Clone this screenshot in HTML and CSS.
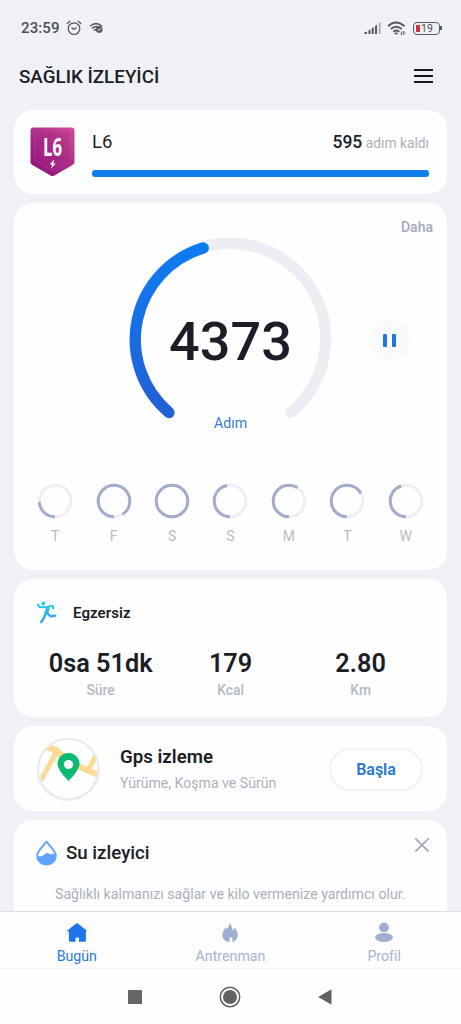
FILE: index.html
```html
<!DOCTYPE html>
<html lang="tr">
<head>
<meta charset="utf-8">
<meta name="viewport" content="width=device-width, initial-scale=1">
<title>Sağlık İzleyici</title>
<link rel="stylesheet" href="styles.css">
</head>
<body>
<div class="phone">
  <div class="status">
    <span class="clock">23:59</span>
    <svg class="alarm" width="16" height="16" viewBox="0 0 16 16" fill="none" stroke="#58595d" stroke-width="1.3" stroke-linecap="round"><circle cx="8" cy="8.6" r="5.8"/><path d="M1.200 3.600 3.800 1.300M14.800 3.600l-2.600-2.300M5.900 7.900 8 9.400l2.300-1.600"/></svg>
    <svg class="linked" width="15" height="12" viewBox="0 0 15 12" fill="none" stroke="#58595d" stroke-width="1.5"><path d="M1 4.200Q7 -1 13 4.200M3 6.500Q6.500 3.400 9.500 4.900M5 8.600Q6.400 7.300 7.600 7.600"/><circle cx="10.200" cy="7.400" r="3.400" fill="#58595d" stroke="none"/><path d="m8.700 7.400 1.200 1.100 1.900-2.200" stroke="#eff1f6" stroke-width="1"/></svg>
    <span class="grow"></span>
    <svg width="18" height="14" viewBox="0 0 18 14"><path fill="#58595d" d="M.4 13v-1.600l2.600-1V13zM4.400 9.500l2-1V13h-2zM7.700 7.300l2-1V13h-2zM11 5l2-1.200V13h-2z"/><path fill="#b2b4b9" d="m14.700 2.400 2-1.400v12h-2z"/></svg>
    <svg class="wifi" width="19" height="15" viewBox="0 0 19 15" fill="none" stroke="#58595d" stroke-width="1.900"><path d="M1 5.200q8-7.200 16.500 0M3.700 8q5.500-4.600 11.100 0M6.300 10.700q3-2.300 6 0"/><path d="m9.200 14-2-2q2-1.200 4 0z" fill="#58595d" stroke="none"/><path d="M14.700 10.400v3.500l-1.200-1.200M16.800 14v-3.600l1.200 1.200" stroke-width="1"/></svg>
    <span class="battery"><i class="charge"></i>19</span><i class="battery-tip"></i>
  </div>

  <header class="header">
    <h1 class="title">SAĞLIK İZLEYİCİ</h1>
    <span class="menu"><i></i><i></i><i></i></span>
  </header>

  <main class="cards">
    <section class="card level">
      <svg class="badge" width="46" height="50" viewBox="0 0 46 50">
        <defs><linearGradient id="shield" x1="1" y1="0" x2="0.2" y2="1"><stop offset="0" stop-color="#d04a96"/><stop offset=".5" stop-color="#ae2f88"/><stop offset="1" stop-color="#8c127a"/></linearGradient></defs>
        <path fill="url(#shield)" d="M3.500.5h38q3 0 3 3V35q0 2-2 3L24.500 48.600q-2 1-4 0L2.500 38q-2-1-2-3V3.500q0-3 3-3z"/>
        <path fill="#a02485" fill-opacity=".28" stroke="#c34b9b" stroke-opacity=".5" stroke-width=".7" d="M5 5h35v28.500L22.500 43.500 5 33.500z"/>
        <path fill="#fff" d="m23.800 33-4.200 4.500h2.400L21.200 41.500l4.600-4.900h-2.600L24.300 33z"/>
        <text class="badge-text" x="22.500" y="28.500" text-anchor="middle" textLength="19" lengthAdjust="spacingAndGlyphs">L6</text>
      </svg>
      <div class="level-info">
        <div class="level-row"><span>L6</span><span class="remaining"><b>595</b> adım kaldı</span></div>
        <div class="progress"></div>
      </div>
    </section>

    <section class="card steps">
      <div class="more">Daha</div>
      <div class="gauge">
        <svg class="dial" width="204" height="190" viewBox="0 0 204 190" fill="none" stroke-width="11.300" stroke-linecap="round">
          <defs><linearGradient id="blue" x1="0" y1="1" x2="0" y2="0"><stop offset="0" stop-color="#235fd5"/><stop offset="1" stop-color="#0e7cf1"/></linearGradient></defs>
          <path stroke="#eceef3" d="M40 174.500A95.700 95.700 0 1 1 162 174.500"/>
          <path stroke="url(#blue)" d="M40 174.500A95.700 95.700 0 0 1 74.200 10"/>
        </svg>
        <div class="count">4373</div>
        <div class="unit">Adım</div>
        <span class="pause"><i></i><i></i></span>
      </div>
      <div class="week">
        <div class="day"><svg class="ring" viewBox="0 0 36 36"><circle class="track" cx="18" cy="18" r="15.800"/><circle class="arc" cx="18" cy="18" r="15.800" pathLength="100" stroke-dasharray="24 100"/></svg>T</div>
        <div class="day"><svg class="ring" viewBox="0 0 36 36"><circle class="track" cx="18" cy="18" r="15.800"/><circle class="arc" cx="18" cy="18" r="15.800" pathLength="100" stroke-dasharray="91 100"/></svg>F</div>
        <div class="day"><svg class="ring" viewBox="0 0 36 36"><circle class="track" cx="18" cy="18" r="15.800"/><circle class="arc" cx="18" cy="18" r="15.800" pathLength="100" stroke-dasharray="100 0"/></svg>S</div>
        <div class="day"><svg class="ring" viewBox="0 0 36 36"><circle class="track" cx="18" cy="18" r="15.800"/><circle class="arc" cx="18" cy="18" r="15.800" pathLength="100" stroke-dasharray="47 100"/></svg>S</div>
        <div class="day"><svg class="ring" viewBox="0 0 36 36"><circle class="track" cx="18" cy="18" r="15.800"/><circle class="arc" cx="18" cy="18" r="15.800" pathLength="100" stroke-dasharray="59 100"/></svg>M</div>
        <div class="day"><svg class="ring" viewBox="0 0 36 36"><circle class="track" cx="18" cy="18" r="15.800"/><circle class="arc" cx="18" cy="18" r="15.800" pathLength="100" stroke-dasharray="67 100"/></svg>T</div>
        <div class="day"><svg class="ring" viewBox="0 0 36 36"><circle class="track" cx="18" cy="18" r="15.800"/><circle class="arc" cx="18" cy="18" r="15.800" pathLength="100" stroke-dasharray="45 100"/></svg>W</div>
      </div>
    </section>

    <section class="card exercise">
      <div class="exercise-head">
        <svg width="22" height="24" viewBox="0 0 22 24" fill="none" stroke="url(#run)" stroke-linecap="round" stroke-linejoin="round">
          <defs><linearGradient id="run" gradientUnits="userSpaceOnUse" x1="10" y1="0" x2="9" y2="22"><stop offset="0" stop-color="#22d3e8"/><stop offset="1" stop-color="#3b9bf0"/></linearGradient></defs>
          <circle cx="7.300" cy="2.500" r="2" fill="#27cfe8" stroke="none"/>
          <path stroke-width="1.900" d="M1.800 3.500 3.300 6 10.500 6.200 16.500 4.600 17.300 7.500"/>
          <path stroke-width="3.800" d="M11.900 7.500 10.300 11.500"/>
          <path stroke-width="2.400" d="m11 12 3.600 3.300 4.700-.6M9.600 12.700l-1.600 4.100L5.300 21"/>
        </svg>
        <h2>Egzersiz</h2>
      </div>
      <div class="stats">
        <div class="stat"><b>0sa 51dk</b><span>Süre</span></div>
        <div class="stat"><b>179</b><span>Kcal</span></div>
        <div class="stat"><b>2.80</b><span>Km</span></div>
      </div>
    </section>

    <section class="card gps">
      <svg class="map" width="64" height="66" viewBox="0 0 64 66">
        <defs><clipPath id="disc"><circle cx="32.300" cy="32" r="29.200"/></clipPath></defs>
        <circle cx="32.300" cy="32.500" r="30.500" fill="#fefefe" stroke="#f0f1f4" stroke-width="2.500"/>
        <circle cx="32.300" cy="32" r="30" fill="#fefefe" stroke="#e7e9ed" stroke-width="1.700"/>
        <g clip-path="url(#disc)" fill="none" stroke="#fadb95">
          <path stroke-width="7" d="m9 9 11 4.500 10 9"/>
          <path stroke-width="5" d="M20 16 5 43"/>
          <path stroke-width="6" d="m42 29 11 5 12 5"/>
          <path stroke-width="5" d="m60 18-8 16"/>
        </g>
        <path fill="#0cba72" d="M32.500 44Q21.500 33 21.500 27a11 11 0 0 1 22 0q0 6-11 17z"/>
        <circle cx="32.500" cy="27.500" r="4.600" fill="#fff"/>
      </svg>
      <div class="gps-text"><h2>Gps izleme</h2><p>Yürüme, Koşma ve Sürün</p></div>
      <button class="start">Başla</button>
    </section>

    <section class="card water">
      <div class="water-head">
        <svg width="22" height="26" viewBox="0 0 22 26"><path fill="#fff" stroke="#68aaf8" stroke-width="2" stroke-linejoin="round" d="M10.500 1.500C7.500 6 1.200 11 1.200 15.700a9.300 8.800 0 0 0 18.600 0C19.800 11 13.500 6 10.500 1.500z"/><path fill="#5ea2fa" d="M1.200 15.700q5 1.500 7.500-1.500 2-2 5-.4 2.500 1.200 6.100-.3v2.200a9.300 8.800 0 0 1-18.600 0z"/></svg>
        <h2>Su izleyici</h2>
        <svg class="close" width="16" height="16" viewBox="0 0 16 16" stroke="#a3a8b5" stroke-width="1.700"><path d="m1.300 1.300 13.400 13.400M14.700 1.300 1.300 14.700"/></svg>
      </div>
      <p>Sağlıklı kalmanızı sağlar ve kilo vermenize yardımcı olur.</p>
    </section>
  </main>

  <nav class="tabs">
    <a class="tab active"><svg width="20" height="20" viewBox="0 0 20 20"><path fill="#1d75ed" d="M10 .8q.7 0 1.200.5L19.600 8q.8.800-.4 1.100h-.3V18q0 1.300-1.300 1.300h-5.600v-3.500q0-.8-.8-.8H9.300q-.8 0-.8.800v3.500H3.200Q1.900 19.300 1.900 18V9.100H.8Q-.4 8.800.4 8l8.400-6.700Q9.300.8 10 .8z"/></svg>Bugün</a>
    <a class="tab"><svg width="20" height="22" viewBox="0 0 20 22"><path fill="#a0aed0" d="M9.600.5C10.800 3.500 12.600 5.500 12.800 8.800L15 5.800C17 9 19 12 17.800 16 16.800 19 14.200 20.800 12.200 21c1-2 .5-3.700-1.200-5.500-1.700 1.800-2 3.500-1.400 5.500C4.700 20.500 2 17.500 2 13.500 2 9.700 4.500 8 5.500 5.600l1.300 2C8 5.500 9.500 3.500 9.600.5z"/></svg>Antrenman</a>
    <a class="tab"><svg width="20" height="22" viewBox="0 0 20 22" fill="#a0aed0"><circle cx="10" cy="5.700" r="5.100"/><ellipse cx="10" cy="16.200" rx="9.300" ry="4.700"/></svg>Profil</a>
  </nav>

  <div class="system">
    <svg width="14" height="14" viewBox="0 0 14 14"><path fill="#666" d="M0 0h14v14H0z"/></svg>
    <svg width="22" height="22" viewBox="0 0 22 22"><circle cx="11" cy="11" r="9.700" fill="none" stroke="#626262" stroke-width="1.500"/><circle cx="11" cy="11" r="7" fill="#626262"/></svg>
    <svg width="14" height="16" viewBox="0 0 14 16"><path fill="#626262" d="M13.500.3v15.400L.2 8z"/></svg>
  </div>
</div>
</body>
</html>
```
FILE: styles.css
```css
* { box-sizing: border-box; }
body { margin: 0; font-family: Roboto, sans-serif; color: #1b1e26; }
h1, h2, p { margin: 0; font-weight: 500; white-space: nowrap; }
b { font-weight: 500; }
svg { display: block; flex: none; }

.phone { width: 461px; height: 1024px; background: #eff1f6; display: flex; flex-direction: column; overflow: hidden; }

.status { height: 56px; flex: none; display: flex; align-items: center; padding: 0 19px 0 21px; }
.clock { font-size: 15px; font-weight: 500; color: #4d4e52; width: 45px; letter-spacing: .1px; }
.linked { margin-left: 7px; }
.grow { flex: 1; }
.wifi { margin: 0 7px 0 5px; }
.battery { width: 27px; height: 13px; border: 1.500px solid #58595d; border-radius: 4px; display: flex; align-items: center; font-size: 10.500px; line-height: 12px; color: #4d4e52; padding: 1px 0 0 2px; }
.charge { width: 4px; height: 7px; background: #cf3145; margin: -1px 1px 0 0; }
.battery-tip { width: 2px; height: 4px; background: #58595d; }

.header { height: 54px; flex: none; display: flex; justify-content: space-between; padding: 9px 28px 0 19px; }
.title { font-size: 18.800px; line-height: 24px; }
.menu { display: grid; gap: 4px; align-content: start; padding-top: 4px; }
.menu i { width: 19px; height: 2px; background: #16191f; }

.cards { flex: 1; min-height: 0; overflow: hidden; padding: 0 14px; display: flex; flex-direction: column; gap: 9px; }
.card { background: #fefefe; border-radius: 19px; flex: none; }

.level { height: 84px; display: flex; padding: 17px 18px 0 16px; }
.badge-text { font-family: "Open Sans", Roboto, sans-serif; font-size: 25px; font-weight: 700; fill: #fff; }
.level-info { flex: 1; margin-left: 16px; }
.level-row { display: flex; justify-content: space-between; font-size: 18.500px; line-height: 30px; height: 43px; }
.remaining { font-size: 13.800px; color: #adb0b9; }
.remaining b { font-size: 17.500px; color: #1b1e26; }
.progress { height: 7px; background: #0f80ec; border-radius: 3px; }

.steps { height: 367px; display: flex; flex-direction: column; }
.more { height: 35px; padding: 15px 14px 0 0; text-align: right; font-size: 14px; line-height: 19px; font-weight: 500; color: #a3a9bd; }
.gauge { height: 245px; display: grid; grid-template-columns: 1fr 204px 1fr; justify-items: center; }
.dial { grid-area: 1 / 2; }
.count { grid-area: 1 / 2; font-size: 54px; line-height: 60px; font-weight: 500; padding-top: 74px; }
.unit { grid-area: 1 / 2; font-size: 14.100px; line-height: 20px; color: #377bcd; padding-top: 175px; }
.pause { grid-area: 1 / 3; width: 42px; height: 42px; margin-top: 81px; border-radius: 50%; background: #f9fafc; display: flex; gap: 5px; align-items: center; justify-content: center; }
.pause i { width: 4px; height: 13px; border-radius: 1px; background: #1f78d8; }
.week { display: grid; grid-template-columns: repeat(7, 1fr); padding: 0 12px; }
.day { display: flex; flex-direction: column; align-items: center; font-size: 14px; line-height: 18px; color: #b8bcc6; gap: 8px; }
.ring { width: 36px; height: 36px; transform: rotate(90deg); fill: none; stroke-width: 3; }
.track { stroke: #eeeff3; }
.arc { stroke: #a2adcb; }

.exercise { height: 138px; padding: 22px 15px 0 22px; }
.exercise-head { display: flex; align-items: center; gap: 15px; height: 24px; }
.exercise-head h2 { font-size: 15px; font-weight: 600; letter-spacing: .1px; }
.stats { display: grid; grid-template-columns: 130px 130px 130px; margin: 23px 0 0 -.400px; }
.stat { display: flex; flex-direction: column; align-items: center; white-space: nowrap; }
.stat b { font-size: 25.300px; font-weight: 600; line-height: 32px; }
.stat span { font-size: 13.800px; line-height: 21px; font-weight: 500; color: #b4b9c5; }

.gps { height: 85px; display: flex; padding: 11px 24px 0 22px; }
.gps-text { flex: 1; margin: 8px 0 0 20px; }
.gps-text h2 { font-size: 18.700px; font-weight: 600; line-height: 24px; }
.gps-text p { font-size: 14.100px; line-height: 20px; margin-top: 4px; font-weight: 400; color: #acb1bf; }
.start { width: 94px; height: 43px; margin-top: 11px; border: 2px solid #f0f2f5; border-radius: 22px; background: #fff; font: 600 16px Roboto, sans-serif; color: #2577cd; padding: 0; }

.water { height: 120px; padding: 19px 17px 0 22px; }
.water-head { display: flex; height: 28px; align-items: center; }
.water-head h2 { font-size: 18.700px; font-weight: 500; margin-left: 8px; }
.close { margin: -17px 0 0 auto; }
.water p { font-size: 14.150px; line-height: 20px; font-weight: 400; color: #a9afbd; margin: 17px 0 0 19px; }

.tabs { height: 58px; flex: none; background: #fdfdfe; border-top: 1px solid #dcdee3; border-bottom: 1px solid #f0f1f3; display: grid; grid-template-columns: repeat(3, 1fr); }
.tab { display: flex; flex-direction: column; align-items: center; padding-top: 10px; font-size: 14.200px; line-height: 20px; color: #aab4c9; }
.tab svg { height: 21px; margin-bottom: 3px; }
.tab.active { color: #287bd6; }

.system { height: 55px; flex: none; background: #fefefe; display: flex; align-items: center; justify-content: center; gap: 77px; padding-right: 1px; }
```
